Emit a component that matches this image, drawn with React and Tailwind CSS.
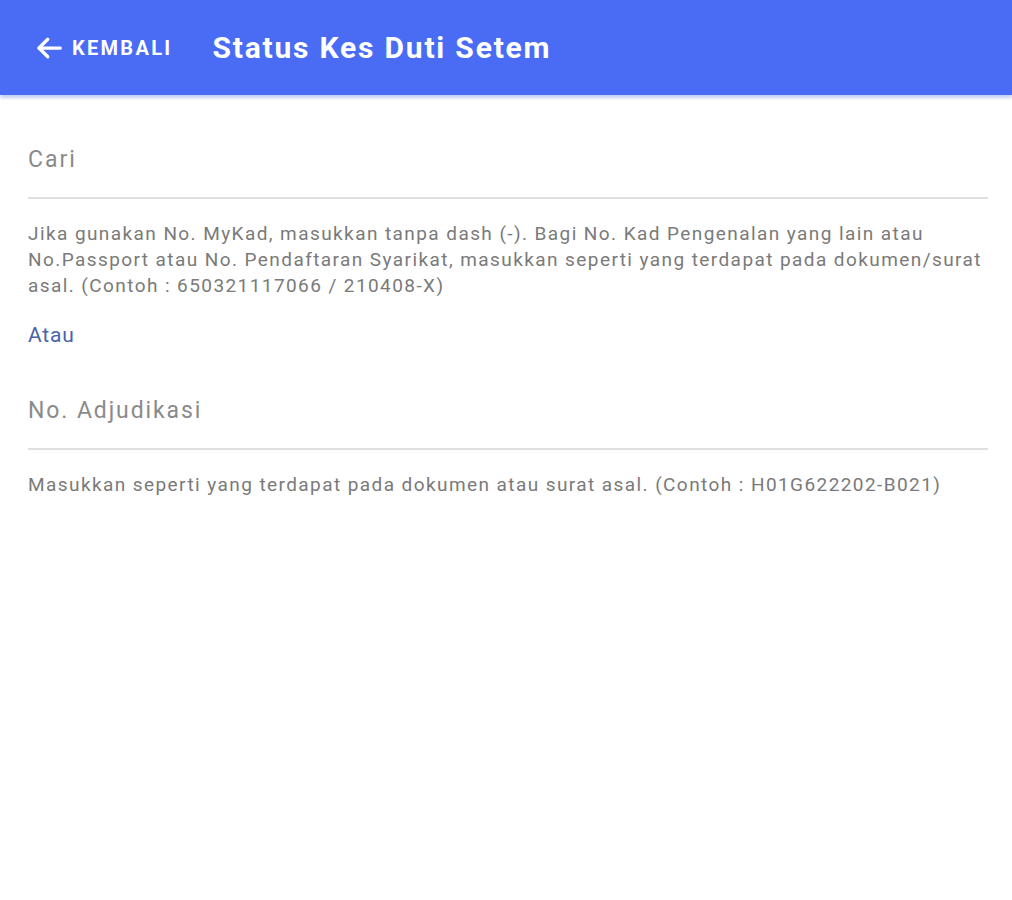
import React from "react";

function BackArrow() {
  return (
    <svg width="30" height="30" viewBox="0 0 24 24" fill="none" stroke="currentColor" strokeWidth="2.6" strokeLinecap="round" strokeLinejoin="round">
      <path d="M21 12H4" />
      <path d="M11 5l-7 7 7 7" />
    </svg>
  );
}

function Field({ label, help, top, labelTrack }) {
  return (
    <div className={top}>
      <div className={`pb-[22px] border-b-2 border-[#e0e0e0] text-[23px] leading-[30px] text-[#8a8a8a] ${labelTrack}`}>{label}</div>
      <p className="mt-[22px] text-[19px] leading-[26px] tracking-[1.42px] text-[#7a7a7a]">{help}</p>
    </div>
  );
}

export default function App() {
  return (
    <div className="min-h-[900px] bg-white" style={{ fontFamily: "Roboto, 'Noto Sans', sans-serif" }}>
      <header className="h-[95px] bg-[#4a6cf5] flex items-center text-white shadow-[0_3px_3px_rgba(90,120,220,0.35)]">
        <button className="flex items-center gap-[8px] ml-[34px]">
          <BackArrow />
          <span className="text-[20px] font-bold tracking-[2.3px]">KEMBALI</span>
        </button>
        <h1 className="ml-[40px] text-[30px] font-bold tracking-[1.8px]">Status Kes Duti Setem</h1>
      </header>

      <main className="pl-[28px] pr-[24px]">
        <Field
          top="pt-[50px]"
          labelTrack="tracking-[2px]"
          label="Cari"
          help="Jika gunakan No. MyKad, masukkan tanpa dash (-). Bagi No. Kad Pengenalan yang lain atau No.Passport atau No. Pendaftaran Syarikat, masukkan seperti yang terdapat pada dokumen/surat asal. (Contoh : 650321117066 / 210408-X)"
        />
        <div className="mt-[22px] text-[21px] leading-[28px] tracking-[0.8px] text-[#4a63a8]">Atau</div>
        <Field
          top="pt-[47px]"
          labelTrack="tracking-[1.9px]"
          label="No. Adjudikasi"
          help="Masukkan seperti yang terdapat pada dokumen atau surat asal. (Contoh : H01G622202-B021)"
        />
      </main>
    </div>
  );
}
